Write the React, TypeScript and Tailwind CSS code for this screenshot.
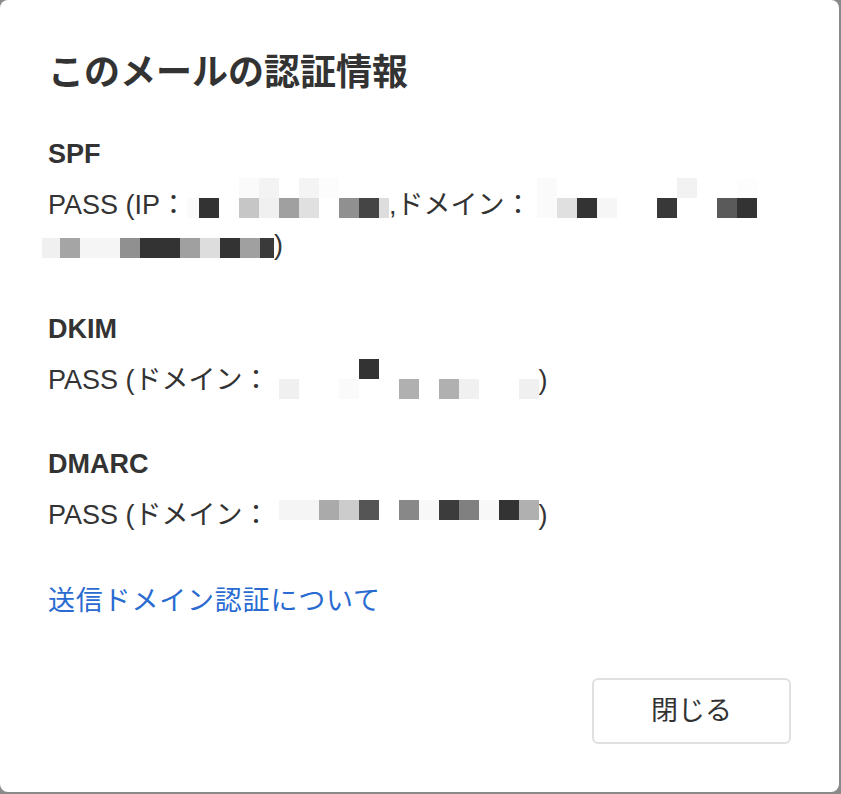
type Cell = { w?: string; top?: string; bot?: string }

// redaction mosaics, one entry per 20px column (top row sits above the text line)
const SPF_IP: Cell[] = [
  { w: 'w-[12px]', bot: 'bg-[#fafafa]' },
  { bot: 'bg-[#333333]' },
  {},
  { top: 'bg-[#fafafa]', bot: 'bg-[#c6c6c6]' },
  { top: 'bg-[#f3f3f3]', bot: 'bg-[#f0f0f0]' },
  { bot: 'bg-[#a0a0a0]' },
  { top: 'bg-[#f4f4f4]', bot: 'bg-[#e0e0e0]' },
  { top: 'bg-[#fcfcfc]' },
  { bot: 'bg-[#909090]' },
  { bot: 'bg-[#454545]' },
  { w: 'w-[10px]', bot: 'bg-[#dddddd]' },
]

const SPF_DOMAIN: Cell[] = [
  { w: 'w-[5px]' },
  { top: 'bg-[#fafafa]', bot: 'bg-[#fafafa]' },
  { bot: 'bg-[#e0e0e0]' },
  { bot: 'bg-[#333333]' },
  { bot: 'bg-[#f6f6f6]' },
  {},
  {},
  { bot: 'bg-[#383838]' },
  { top: 'bg-[#f2f2f2]' },
  {},
  { bot: 'bg-[#5a5a5a]' },
  { top: 'bg-[#fdfdfd]', bot: 'bg-[#333333]' },
]

const SPF_DOMAIN_2: Cell[] = [
  { w: 'w-[18px]', bot: 'bg-[#f0f0f0]' },
  { bot: 'bg-[#a5a5a5]' },
  { bot: 'bg-[#f5f5f5]' },
  { bot: 'bg-[#f5f5f5]' },
  { bot: 'bg-[#909090]' },
  { bot: 'bg-[#333333]' },
  { bot: 'bg-[#333333]' },
  { bot: 'bg-[#a0a0a0]' },
  { bot: 'bg-[#dddddd]' },
  { bot: 'bg-[#333333]' },
  { bot: 'bg-[#a0a0a0]' },
  { w: 'w-[14px]', bot: 'bg-[#3a3a3a]' },
]

const DKIM_DOMAIN: Cell[] = [
  { bot: 'bg-[#f0f0f0]' },
  {},
  {},
  { bot: 'bg-[#fafafa]' },
  { top: 'bg-[#333333]' },
  {},
  { bot: 'bg-[#b0b0b0]' },
  {},
  { bot: 'bg-[#b0b0b0]' },
  { bot: 'bg-[#f0f0f0]' },
  {},
  {},
  { bot: 'bg-[#f0f0f0]' },
]

const DMARC_DOMAIN: Cell[] = [
  { bot: 'bg-[#f5f5f5]' },
  { bot: 'bg-[#f5f5f5]' },
  { bot: 'bg-[#aaaaaa]' },
  { bot: 'bg-[#cccccc]' },
  { bot: 'bg-[#555555]' },
  {},
  { bot: 'bg-[#888888]' },
  { bot: 'bg-[#f8f8f8]' },
  { bot: 'bg-[#3c3c3c]' },
  { bot: 'bg-[#808080]' },
  { bot: 'bg-[#f8f8f8]' },
  { bot: 'bg-[#333333]' },
  { bot: 'bg-[#b0b0b0]' },
]

function Mosaic({ cells, className = '' }: { cells: Cell[]; className?: string }) {
  return (
    <span className={`relative inline-flex h-5 ${className}`}>
      {cells.map((c, i) => (
        <span key={i} className={`h-5 ${c.w ?? 'w-5'} ${c.bot ?? ''}`} />
      ))}
      <span className="absolute bottom-full left-0 flex">
        {cells.map((c, i) => (
          <span key={i} className={`h-5 ${c.w ?? 'w-5'} ${c.top ?? ''}`} />
        ))}
      </span>
    </span>
  )
}

function Section({ title, children, first }: { title: string; children: React.ReactNode; first?: boolean }) {
  return (
    <div className={first ? 'mt-[38px]' : 'mt-[46px]'}>
      <h3 className="text-[27px] font-bold leading-9">{title}</h3>
      <p className="mt-[13px] text-[27px] leading-10">{children}</p>
    </div>
  )
}

export default function App() {
  return (
    <div className="min-h-screen bg-[#8a8a8a] font-['Liberation_Sans','Noto_Sans_CJK_JP',sans-serif] text-[#333333]">
      <div className="w-[839px] h-[792px] bg-white rounded-lg flex flex-col p-12">
        <h2 className="text-[36px] font-bold leading-[50px]">このメールの認証情報</h2>

        <Section title="SPF" first>
          PASS (IP：
          <Mosaic cells={SPF_IP} className="align-[-4px]" />,ドメイン：
          <Mosaic cells={SPF_DOMAIN} className="align-[-4px]" />
          <br />
          <Mosaic cells={SPF_DOMAIN_2} className="-ml-1.5 align-[-4px]" />)
        </Section>

        <Section title="DKIM">
          PASS (ドメイン：
          <Mosaic cells={DKIM_DOMAIN} className="ml-[9px] align-[-10px]" />)
        </Section>

        <Section title="DMARC">
          PASS (ドメイン：
          <Mosaic cells={DMARC_DOMAIN} className="ml-[9px] align-[4px]" />)
        </Section>

        <a href="#" className="mt-[46px] block text-[27px] leading-10 tracking-[0.8px] text-[#2a6bd1]">
          送信ドメイン認証について
        </a>

        <div className="mt-auto flex justify-end">
          <button className="w-[199px] h-[66px] rounded-md border-2 border-[#e0e0e0] bg-white text-[27px] text-[#333333]">
            閉じる
          </button>
        </div>
      </div>
    </div>
  )
}
